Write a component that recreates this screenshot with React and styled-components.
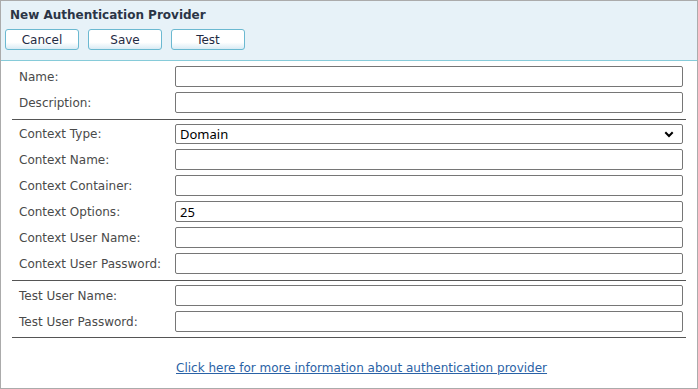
import React from "react";
import styled, { createGlobalStyle } from "styled-components";

const GlobalStyle = createGlobalStyle`
  html, body {
    margin: 0;
    padding: 0;
    background: #fff;
  }
  body {
    font-family: "DejaVu Sans", Verdana, sans-serif;
  }
`;

const Panel = styled.div`
  width: 698px;
  height: 389px;
  box-sizing: border-box;
  border: 1px solid #ababab;
  display: flex;
  flex-direction: column;
`;

const Header = styled.div`
  background: #e7f2f8;
  border-bottom: 1px solid #86cbd9;
  height: 60px;
  box-sizing: border-box;
  padding: 6px 0 0 9px;
`;

const Title = styled.h2`
  margin: 0;
  font-size: 12px;
  font-weight: bold;
  color: #2b3546;
  line-height: 16px;
`;

const Toolbar = styled.div`
  display: flex;
  gap: 9px;
  margin: 6px 0 0 -5px;
`;

const Button = styled.button`
  width: 74px;
  height: 21px;
  box-sizing: border-box;
  border: 1px solid #6bb9d1;
  border-radius: 3px;
  background: linear-gradient(to bottom, #ffffff 0%, #ffffff 65%, #d9ebf4 100%);
  color: #1f2b44;
  font-family: "DejaVu Sans", Verdana, sans-serif;
  font-size: 12px;
  padding: 0;
  cursor: pointer;
`;

const Form = styled.div`
  padding: 0 11px;
`;

const Section = styled.div`
  display: grid;
  grid-template-columns: 156px 1fr;
  row-gap: 5px;
  align-items: center;
  padding: ${(p) => p.$top}px 3px ${(p) => p.$bottom}px 7px;
  border-bottom: 1px solid #555;
`;

const Label = styled.label`
  font-size: 12px;
  color: #4a4a4a;
`;

const Input = styled.input`
  height: 21px;
  box-sizing: border-box;
  border: 1px solid #767676;
  border-radius: 2px;
  padding: 0 4px;
  font-family: "Noto Sans", sans-serif;
  font-size: 13px;
  color: #000;
  width: 100%;
`;

const SelectBox = styled.div`
  height: 20px;
  box-sizing: border-box;
  border: 1px solid #767676;
  border-radius: 2px;
  display: flex;
  align-items: center;
  justify-content: space-between;
  padding: 0 8px 0 4px;
  font-family: "Noto Sans", sans-serif;
  font-size: 13px;
  color: #000;
`;

const Footer = styled.div`
  padding: 19px 0 0 175px;
`;

const Link = styled.a`
  font-size: 12px;
  color: #2a62a6;
  text-decoration: underline;
`;

const Chevron = () => (
  <svg width="10" height="7" viewBox="0 0 10 7">
    <path d="M1.3 1.3 L5 5 L8.7 1.3" stroke="#000" strokeWidth="2" fill="none" />
  </svg>
);

const Field = ({ label, value }) => (
  <>
    <Label>{label}</Label>
    <Input defaultValue={value} />
  </>
);

export default function App() {
  return (
    <>
      <GlobalStyle />
      <Panel>
        <Header>
          <Title>New Authentication Provider</Title>
          <Toolbar>
            <Button>Cancel</Button>
            <Button>Save</Button>
            <Button>Test</Button>
          </Toolbar>
        </Header>
        <Form>
          <Section $top={5} $bottom={6}>
            <Field label="Name:" />
            <Field label="Description:" />
          </Section>
          <Section $top={4} $bottom={6}>
            <Label>Context Type:</Label>
            <SelectBox>
              <span>Domain</span>
              <Chevron />
            </SelectBox>
            <Field label="Context Name:" />
            <Field label="Context Container:" />
            <Field label="Context Options:" value="25" />
            <Field label="Context User Name:" />
            <Field label="Context User Password:" />
          </Section>
          <Section $top={4} $bottom={5}>
            <Field label="Test User Name:" />
            <Field label="Test User Password:" />
          </Section>
        </Form>
        <Footer>
          <Link href="#">Click here for more information about authentication provider</Link>
        </Footer>
      </Panel>
    </>
  );
}
